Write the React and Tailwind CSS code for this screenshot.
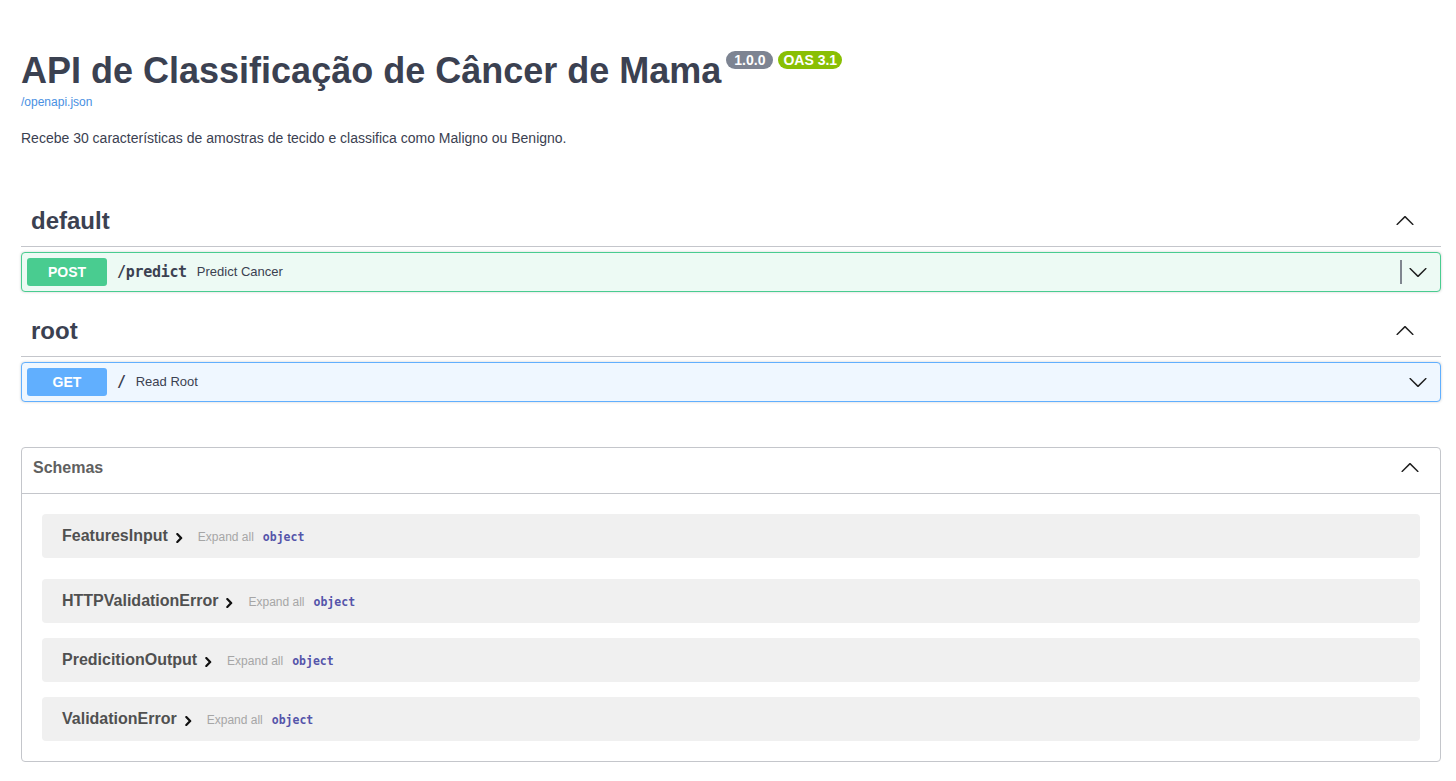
const sans = { fontFamily: '"Liberation Sans", Arial, sans-serif' };

const Arrow = ({ up = false, className = '' }) => (
  <svg
    width="20"
    height="20"
    viewBox="0 0 20 20"
    className={[up ? 'rotate-180' : '', className].join(' ')}
    fill="#1f1f1f"
  >
    <path d="M17.418 6.109c.272-.268.709-.268.979 0s.271.701 0 .969l-7.908 7.83c-.27.268-.707.268-.979 0l-7.908-7.83c-.27-.268-.27-.701 0-.969.271-.268.709-.268.979 0L10 13.25l7.418-7.141z" />
  </svg>
);

const Small = () => (
  <svg width="10" height="10" viewBox="0 0 20 20" fill="#111" className="ml-[6px] mt-[3px]">
    <path d="M13.25 10L6.109 2.58c-.268-.27-.268-.707 0-.979.268-.27.701-.27.969 0l7.83 7.908c.268.271.268.709 0 .979l-7.83 7.908c-.268.271-.701.27-.969 0-.268-.269-.268-.707 0-.979L13.25 10z" stroke="#111" strokeWidth="3" />
  </svg>
);

const TagHeader = ({ name }) => (
  <div className="flex h-[52px] items-center border-b border-[#c4c6cb] pl-[10px] pr-[26px]">
    <h3 className="flex-1 text-[24px] font-bold text-[#3b4151]">{name}</h3>
    <Arrow up />
  </div>
);

const Operation = ({ method, path, summary, color, bg, divider }) => (
  <div
    className={[
      'mt-[5px] flex h-[40px] items-center rounded-[4px] border p-[5px] shadow-[0_0_3px_rgba(0,0,0,0.19)]',
      color === 'green' ? 'border-[#49cc90] bg-[#edfaf4]' : 'border-[#61affe] bg-[#eff7ff]',
    ].join(' ')}
  >
    <span
      className={[
        'flex h-[28px] w-[80px] items-center justify-center rounded-[3px] text-[14px] font-bold text-white',
        bg,
      ].join(' ')}
    >
      {method}
    </span>
    <span
      className="ml-[10px] text-[15px] font-bold tracking-[-0.3px] text-[#3b4151]"
      style={{ fontFamily: '"DejaVu Sans Mono", monospace' }}
    >
      {path}
    </span>
    <span className="ml-[10px] flex-1 text-[13px] text-[#3b4151]">{summary}</span>
    {divider && <span className="mr-[6px] h-[24px] w-[2px] bg-[#80868f]" />}
    <Arrow className="mr-[7px]" />
  </div>
);

const Model = ({ name, className = '' }) => (
  <div className={['mx-[20px] flex h-[44px] items-center rounded-[4px] bg-[#f0f0f0] pl-[20px]', className].join(' ')}>
    <span className="flex items-center text-[16px] font-bold text-[#505050]">
      {name}
      <Small />
    </span>
    <span className="ml-[14px] mt-[2px] text-[12px] text-[#a6a6a6]">Expand all</span>
    <span
      className="ml-[9px] mt-[3px] text-[11.5px] font-bold text-[#5555aa]"
      style={{ fontFamily: '"DejaVu Sans Mono", monospace' }}
    >
      object
    </span>
  </div>
);

export default function App() {
  return (
    <div className="min-h-screen bg-white pb-[40px] pl-[21px] pr-[15px]" style={sans}>
      <div className="pt-[50px]">
        <div className="flex items-start">
          <h2 className="text-[36px] font-bold leading-[41px] text-[#3b4151]">
            API de Classificação de Câncer de Mama
          </h2>
          <span className="ml-[5px] mt-[1px] flex h-[18px] items-center rounded-full bg-[#7d8492] px-[8px] text-[14px] font-bold text-white">
            1.0.0
          </span>
          <span className="ml-[5px] mt-[1px] flex h-[18px] items-center rounded-full bg-[#89bf04] px-[5px] text-[14px] font-bold text-white">
            OAS 3.1
          </span>
        </div>
        <a className="mt-[4px] block text-[12px] leading-[14px] text-[#4990e2]">/openapi.json</a>
        <p className="mt-[21px] text-[14px] leading-[16px] text-[#3b4151]">
          Recebe 30 características de amostras de tecido e classifica como Maligno ou Benigno.
        </p>
      </div>

      <div className="mt-[49px]">
        <TagHeader name="default" />
        <Operation method="POST" path="/predict" summary="Predict Cancer" color="green" bg="bg-[#49cc90]" divider />
      </div>

      <div className="mt-[13px]">
        <TagHeader name="root" />
        <Operation method="GET" path="/" summary="Read Root" color="blue" bg="bg-[#61affe]" />
      </div>

      <div className="mt-[45px] rounded-[4px] border border-[#c4c6cb]">
        <div className="flex h-[46px] items-center border-b border-[#c4c6cb] pb-[5px] pl-[11px] pr-[20px]">
          <h4 className="flex-1 text-[16px] font-bold text-[#606060]">Schemas</h4>
          <Arrow up />
        </div>
        <div className="pb-[20px] pt-[20px]">
          <Model name="FeaturesInput" className="mb-[21px]" />
          <Model name="HTTPValidationError" className="mb-[15px]" />
          <Model name="PredicitionOutput" className="mb-[15px]" />
          <Model name="ValidationError" />
        </div>
      </div>
    </div>
  );
}
